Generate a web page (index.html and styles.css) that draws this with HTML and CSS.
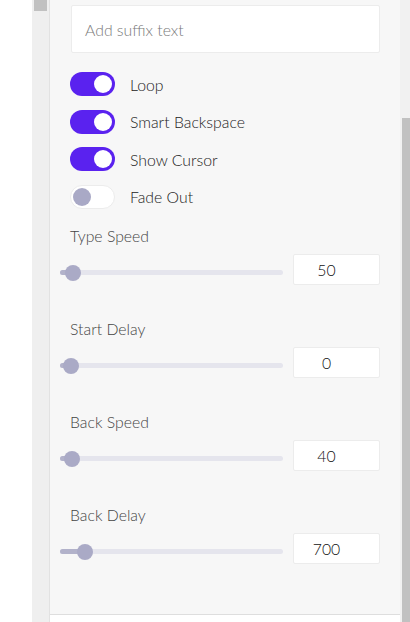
FILE: index.html
```html
<!DOCTYPE html>
<html>
<head>
<meta charset="utf-8">
<link rel="stylesheet" href="styles.css">
</head>
<body>
<div class="page">
  <div class="gutter"></div>
  <div class="strip"><div class="strip-thumb"></div></div>
  <div class="panel">
    <div class="content">
      <div class="text-input">Add suffix text</div>
      <div class="toggles">
        <div class="toggle-row"><span class="switch on"><span class="knob"></span></span><span class="toggle-label">Loop</span></div>
        <div class="toggle-row"><span class="switch on"><span class="knob"></span></span><span class="toggle-label">Smart Backspace</span></div>
        <div class="toggle-row"><span class="switch on"><span class="knob"></span></span><span class="toggle-label">Show Cursor</span></div>
        <div class="toggle-row"><span class="switch off"><span class="knob"></span></span><span class="toggle-label">Fade Out</span></div>
      </div>
      <div class="field">
        <div class="field-label">Type Speed</div>
        <div class="field-row">
          <div class="slider"><div class="fill" style="width:13px"></div><div class="thumb" style="left:5px"></div></div>
          <div class="num">50</div>
        </div>
      </div>
      <div class="field">
        <div class="field-label">Start Delay</div>
        <div class="field-row">
          <div class="slider"><div class="fill" style="width:11px"></div><div class="thumb" style="left:3px"></div></div>
          <div class="num">0</div>
        </div>
      </div>
      <div class="field">
        <div class="field-label">Back Speed</div>
        <div class="field-row">
          <div class="slider"><div class="fill" style="width:12px"></div><div class="thumb" style="left:4px"></div></div>
          <div class="num">40</div>
        </div>
      </div>
      <div class="field">
        <div class="field-label">Back Delay</div>
        <div class="field-row">
          <div class="slider"><div class="fill" style="width:25px"></div><div class="thumb" style="left:17px"></div></div>
          <div class="num">700</div>
        </div>
      </div>
    </div>
    <div class="footer"></div>
  </div>
  <div class="scrollbar"><div class="scroll-thumb"></div></div>
</div>
</body>
</html>
```
FILE: styles.css
```css
html, body {
  margin: 0;
  padding: 0;
  height: 100%;
  background: #ffffff;
  font-family: Lato, "Open Sans", sans-serif;
  font-weight: 300;
}
.page {
  display: flex;
  height: 622px;
  overflow: hidden;
}
.gutter {
  width: 32px;
  flex: none;
  background: #ffffff;
}
.strip {
  flex: none;
  background: #efefef;
  border-right: 1px solid #e2e2e2;
  box-sizing: border-box;
  width: 18px;
  padding: 0 2px;
}
.strip-thumb {
  height: 11px;
  background: #c1c1c1;
}
.panel {
  flex: 1;
  display: flex;
  flex-direction: column;
  background: #f7f7f7;
}
.content {
  height: 614px;
  box-sizing: border-box;
  padding: 5px 20px 0 20px;
}
.footer {
  flex: 1;
  border-top: 1px solid #dedede;
  background: #ffffff;
}
.text-input {
  margin-left: 1px;
  height: 48px;
  box-sizing: border-box;
  background: #ffffff;
  border: 1px solid #ececec;
  border-radius: 2px;
  padding-left: 13px;
  display: flex;
  align-items: center;
  font-size: 15.8px;
  color: #7a7a7a;
}
.toggles {
  margin-top: 19px;
  display: flex;
  flex-direction: column;
  gap: 13.67px;
}
.toggle-row {
  display: flex;
  align-items: center;
  height: 24px;
}
.switch {
  width: 45px;
  height: 24px;
  border-radius: 12px;
  box-sizing: border-box;
  display: flex;
  align-items: center;
  padding: 0 3px;
}
.switch.on {
  background: #5a22ef;
  justify-content: flex-end;
}
.switch.off {
  background: #ffffff;
  border: 1px solid #ececec;
  padding: 0 2px;
}
.knob {
  width: 18px;
  height: 18px;
  border-radius: 50%;
  background: #ffffff;
}
.switch.off .knob {
  background: #a9a9c6;
}
.toggle-label {
  margin-left: 15px;
  font-size: 15.8px;
  color: #222222;
}
.toggles + .field {
  margin-top: 17px;
}
.field {
  height: 93px;
}
.field-label {
  font-size: 15.8px;
  line-height: 20px;
  color: #444444;
}
.field-row {
  margin-top: 8px;
  margin-left: -10px;
  display: flex;
  align-items: center;
  gap: 10px;
}
.slider {
  position: relative;
  width: 223px;
  height: 5px;
  margin-top: 7px;
  border-radius: 3px;
  background: #e5e5ed;
}
.fill {
  height: 5px;
  border-radius: 3px;
  background: #b2b2ca;
}
.thumb {
  position: absolute;
  top: -5.5px;
  width: 16px;
  height: 16px;
  border-radius: 50%;
  background: #aaaac6;
}
.num {
  width: 87px;
  height: 31px;
  box-sizing: border-box;
  background: #ffffff;
  border: 1px solid #ececec;
  border-radius: 2px;
  padding-right: 20px;
  display: flex;
  align-items: center;
  justify-content: center;
  font-size: 15.8px;
  color: #111111;
}
.scrollbar {
  width: 10px;
  flex: none;
  background: #f1f1f1;
  padding-left: 2px;
  box-sizing: border-box;
}
.scroll-thumb {
  margin-top: 118px;
  height: 504px;
  background: #c1c1c1;
}
```
